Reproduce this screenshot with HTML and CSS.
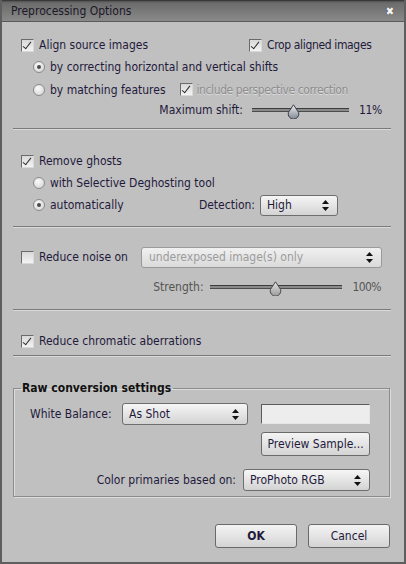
FILE: index.html
```html
<!DOCTYPE html>
<html>
<head>
<meta charset="utf-8">
<title>Preprocessing Options</title>
<link rel="stylesheet" href="styles.css">
</head>
<body>
<div class="window">
  <div class="titlebar">
    <span class="title">Preprocessing Options</span>
    <span class="close">✖</span>
  </div>
  <div class="content">
    <div class="section s1">
      <div class="row r-align">
        <div class="col-left"><span class="cb checked"></span><span class="lbl">Align source images</span></div>
        <div class="item"><span class="cb checked"></span><span class="lbl tight">Crop aligned images</span></div>
      </div>
      <div class="row sub"><span class="rb checked"></span><span class="lbl">by correcting horizontal and vertical shifts</span></div>
      <div class="row sub r3"><span class="rb"></span><span class="lbl">by matching features</span><span class="cb checked small-gap"></span><span class="lbl dim">include perspective correction</span></div>
      <div class="row slider-row shift">
        <span class="lbl">Maximum shift:</span>
        <div class="slider w97"><div class="track"></div><svg class="thumb t-shift" width="13" height="15" viewBox="0 0 13 15"><defs><linearGradient id="g1" x1="0" y1="0" x2="0" y2="1"><stop offset="0" stop-color="#eef0f4"/><stop offset="1" stop-color="#7f8792"/></linearGradient></defs><path d="M6.5 0.8 L11.6 8.4 A5.3 5.3 0 1 1 1.4 8.4 Z" fill="url(#g1)" stroke="#3e3e46" stroke-width="1"/></svg></div>
        <span class="val v-shift">11%</span>
      </div>
    </div>
    <div class="divider d1"></div>
    <div class="section s2">
      <div class="row"><span class="cb checked"></span><span class="lbl">Remove ghosts</span></div>
      <div class="row sub"><span class="rb"></span><span class="lbl">with Selective Deghosting tool</span></div>
      <div class="row sub r-auto">
        <span class="rb checked"></span><span class="lbl">automatically</span>
        <span class="lbl push">Detection:</span>
        <div class="select w78"><span>High</span><svg class="arrows" width="7" height="11" viewBox="0 0 7 11"><path d="M3.5 0 L7 4 H0 Z M0 7 H7 L3.5 11 Z" fill="#111"/></svg></div>
      </div>
    </div>
    <div class="divider d2"></div>
    <div class="section s3">
      <div class="row r-noise">
        <span class="cb"></span><span class="lbl">Reduce noise on</span>
        <div class="select disabled w241 push"><span>underexposed image(s) only</span><svg class="arrows" width="7" height="11" viewBox="0 0 7 11"><path d="M3.5 0 L7 4 H0 Z M0 7 H7 L3.5 11 Z" fill="#111"/></svg></div>
      </div>
      <div class="row slider-row strength">
        <span class="lbl gray">Strength:</span>
        <div class="slider w132"><div class="track"></div><svg class="thumb t-str" width="13" height="15" viewBox="0 0 13 15"><defs><linearGradient id="g2" x1="0" y1="0" x2="0" y2="1"><stop offset="0" stop-color="#e4e4e4"/><stop offset="1" stop-color="#9a9a9a"/></linearGradient></defs><path d="M6.5 0.8 L11.6 8.4 A5.3 5.3 0 1 1 1.4 8.4 Z" fill="url(#g2)" stroke="#4a4a4a" stroke-width="1"/></svg></div>
        <span class="val gray v-str">100%</span>
      </div>
    </div>
    <div class="divider d3"></div>
    <div class="section s4">
      <div class="row"><span class="cb checked"></span><span class="lbl">Reduce chromatic aberrations</span></div>
    </div>
    <div class="divider d4"></div>
    <fieldset class="raw">
      <legend>Raw conversion settings</legend>
      <div class="frow wb">
        <span class="flabel">White Balance:</span>
        <div class="select w126"><span>As Shot</span><svg class="arrows" width="7" height="11" viewBox="0 0 7 11"><path d="M3.5 0 L7 4 H0 Z M0 7 H7 L3.5 11 Z" fill="#111"/></svg></div>
        <div class="textfield"></div>
      </div>
      <div class="frow right">
        <button class="btn preview">Preview Sample...</button>
      </div>
      <div class="frow right cp">
        <span class="lbl">Color primaries based on:</span>
        <div class="select w127"><span>ProPhoto RGB</span><svg class="arrows" width="7" height="11" viewBox="0 0 7 11"><path d="M3.5 0 L7 4 H0 Z M0 7 H7 L3.5 11 Z" fill="#111"/></svg></div>
      </div>
    </fieldset>
    <div class="buttons">
      <button class="btn big ok">OK</button>
      <button class="btn big">Cancel</button>
    </div>
  </div>
</div>
</body>
</html>
```
FILE: styles.css
```css
html, body { margin: 0; padding: 0; }
body {
  font-family: "DejaVu Sans", "Liberation Sans", sans-serif;
  font-stretch: condensed;
  font-size: 12px;
  color: #1f1a3c;
  background: #c0c0c0;
}
.window {
  width: 406px;
  height: 564px;
  box-sizing: border-box;
  background: #c0c0c0;
  border: 2px solid #5e5e5e;
  border-top: none;
  display: flex;
  flex-direction: column;
  overflow: hidden;
}
.titlebar {
  height: 22px;
  margin: 0 -2px;
  box-sizing: border-box;
  background: linear-gradient(#505050 0px, #6c6c6c 2px, #8a8a8a 21px);
  border-top: 1px solid #3a3a3a;
  border-bottom: 1px solid #5a5a5a;
  display: flex;
  align-items: center;
  padding: 0 12px 0 11px;
  flex: none;
}
.title { color: #1b1828; font-size: 12px; }
.close {
  margin-left: auto;
  color: #f4f4f4;
  font-size: 11px;
  text-shadow: 0 0 1px #333;
}
.content {
  flex: 1;
  padding: 0 13px 0 11px;
  display: flex;
  flex-direction: column;
}
.section { display: flex; flex-direction: column; }
.row {
  display: flex;
  align-items: center;
  height: 22px;
  padding-left: 8px;
  white-space: nowrap;
}
.row.sub { padding-left: 20px; }
.s1 { padding-top: 12px; }
.r3 { height: 23px; }
.col-left { flex: 0 0 228px; display: flex; align-items: center; }
.item { display: flex; align-items: center; }
.lbl { margin-left: 5px; }
.tight { letter-spacing: -0.35px; }
.dim { color: #8e8e8e; text-shadow: 0 1px 0 #dcdcdc; margin-left: 4px; letter-spacing: -0.4px; }
.gray { color: #555; }
.small-gap { margin-left: 14px; }
.cb {
  width: 13px;
  height: 13px;
  box-sizing: border-box;
  border: 1px solid #6a6a6a;
  border-right-color: #d8d8d8;
  border-bottom-color: #d8d8d8;
  background: linear-gradient(#d8d8d8, #f4f4f4);
  position: relative;
  flex: none;
}
.cb.checked::after {
  content: "";
  position: absolute;
  left: 3px;
  top: 0px;
  width: 3px;
  height: 8px;
  border-right: 1.3px solid #2a2a2a;
  border-bottom: 1.3px solid #2a2a2a;
  transform: rotate(38deg);
}
.rb {
  width: 12px;
  height: 12px;
  border-radius: 50%;
  box-sizing: border-box;
  border: 1px solid #8a8a8a;
  background: radial-gradient(circle at 40% 35%, #fafafa, #cfcfcf);
  position: relative;
  flex: none;
}
.rb.checked::after {
  content: "";
  position: absolute;
  left: 3px;
  top: 3px;
  width: 4px;
  height: 4px;
  border-radius: 50%;
  background: #4a4a4a;
}
.slider-row { justify-content: flex-end; height: 18px; }
.shift { padding-right: 9px; }
.shift .lbl { margin-right: 9px; }
.strength { padding-right: 10px; margin-top: 10px; }
.strength .lbl { margin-right: 6px; }
.slider { position: relative; height: 15px; display: flex; align-items: center; }
.w97 { width: 97px; }
.w132 { width: 132px; }
.track {
  width: 100%;
  height: 4px;
  box-sizing: border-box;
  background: #8a8a8a;
  border-top: 1px solid #3c3c3c;
  border-bottom: 1px solid #4c4c4c;
}
.thumb { position: absolute; top: 1px; }
.t-shift { left: 35px; }
.t-str { left: 59px; }
.val { margin-left: 10px; letter-spacing: -0.3px; }
.v-str { margin-left: 11px; letter-spacing: -0.6px; }
.divider {
  height: 0;
  border-top: 1px solid #7a7a7a;
  border-bottom: 1px solid #dadada;
  flex: none;
}
.d1 { margin-top: 9px; }
.s2 { padding-top: 20px; }
.r-auto { padding-right: 53px; }
.push { margin-left: auto; }
.r-auto .push { margin-right: 5px; }
.d2 { margin-top: 10px; }
.s3 { padding-top: 18px; }
.r-noise { padding-right: 9px; }
.d3 { margin-top: 13px; }
.s4 { padding-top: 19px; }
.d4 { margin-top: 3px; }
.select {
  height: 21px;
  box-sizing: border-box;
  border: 1px solid #6e6e6e;
  border-radius: 3px;
  background: linear-gradient(#f6f6f6, #d3d3d3);
  display: flex;
  align-items: center;
  padding: 0 8px 0 6px;
  flex: none;
}
.select span { flex: 1; }
.select .arrows { flex: none; }
.select.disabled { color: #9c9c9c; background: linear-gradient(#f0f0f0, #dadada); border-color: #9a9a9a; }
.select.disabled span { padding-left: 1px; }
.w78 { width: 78px; }
.w241 { width: 241px; }
.w126 { width: 126px; height: 22px; }
.w127 { width: 127px; height: 22px; }
.raw {
  margin: 24px 1px 0 0;
  padding: 0 19px 5px 16px;
  border: 1px solid #8c8c8c;
  box-shadow: inset 1px 1px 0 #dcdcdc, 1px 1px 0 #dcdcdc;
  min-width: 0;
  flex: none;
}
.raw legend {
  font-weight: bold;
  color: #111;
  margin-left: -9px;
  padding: 0 2px 0 1px;
  line-height: 15px;
}
.frow { display: flex; align-items: center; }
.wb { margin-top: 7px; }
.flabel { width: 92px; flex: none; }
.textfield {
  margin-left: 13px;
  width: 109px;
  height: 20px;
  box-sizing: border-box;
  background: #ededed;
  border: 1px solid #5c5c5c;
  border-right-color: #e6e6e6;
  border-bottom-color: #e6e6e6;
}
.right { justify-content: flex-end; }
.btn {
  font-family: inherit;
  font-stretch: condensed;
  font-size: 12px;
  color: #1f1a3c;
  border: 1px solid #6a6a6a;
  border-radius: 3px;
  background: linear-gradient(#f4f4f4, #d4d4d4);
  padding: 0;
  margin: 0;
}
.preview { width: 109px; height: 24px; margin-top: 7px; }
.cp { margin-top: 13px; }
.cp .lbl { margin-right: 7px; }
.buttons {
  display: flex;
  justify-content: flex-end;
  gap: 11px;
  margin-top: 27px;
  padding-right: 1px;
  flex: none;
}
.big { width: 82px; height: 24px; font-size: 12px; }
.ok { font-weight: bold; }
```
